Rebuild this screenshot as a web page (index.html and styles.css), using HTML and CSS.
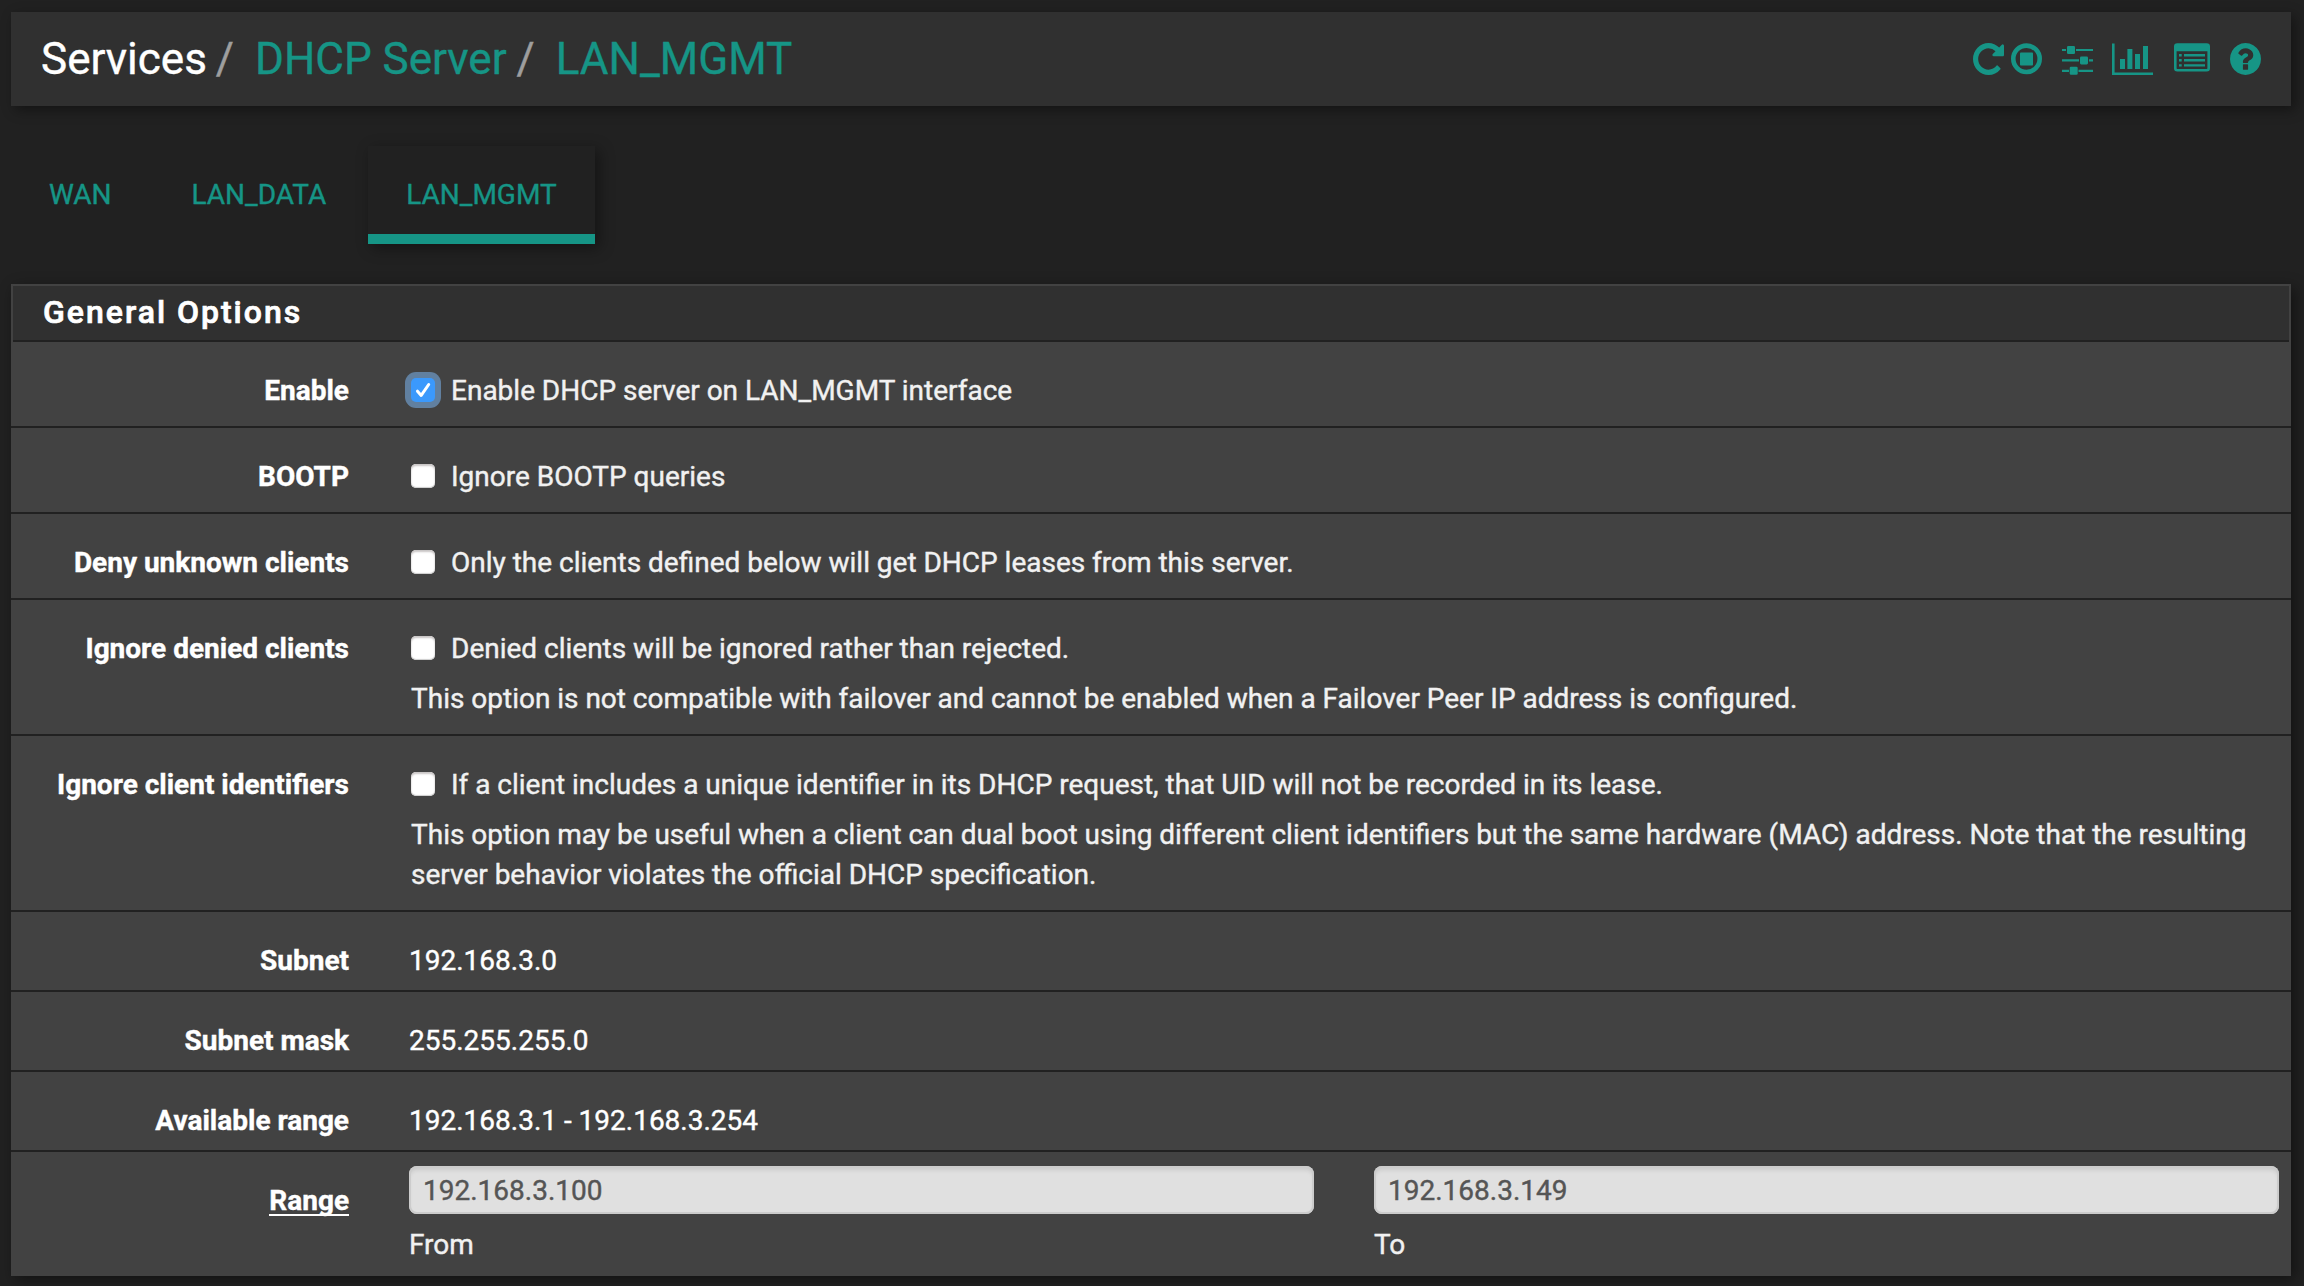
FILE: index.html
```html
<!DOCTYPE html>
<html lang="en">
<head>
<meta charset="utf-8">
<title>Services: DHCP Server: LAN_MGMT</title>
<link rel="stylesheet" href="styles.css">
</head>
<body>
<header class="page-header">
  <ol class="breadcrumb">
    <li class="crumb-root">Services</li>
    <li class="crumb-sep">/</li>
    <li class="crumb-server"><a>DHCP Server</a></li>
    <li class="crumb-sep">/</li>
    <li><a>LAN_MGMT</a></li>
  </ol>
  <div class="tools">
    <svg class="icon-restart" width="31" height="32" viewBox="128 128 1536 1536" preserveAspectRatio="none"><path d="M1664 256v448q0 26-19 45t-45 19h-448q-42 0-59-40-17-39 14-69l138-138q-148-137-349-137-104 0-198.500 40.500t-163.500 109.500-109.500 163.500-40.500 198.500 40.500 198.500 109.500 163.500 163.500 109.500 198.500 40.500q119 0 225-52t179-147q7-10 23-12 14 0 25 9l137 138q9 8 9.500 20.500t-7.500 22.500q-109 132-264 204.500t-327 72.500q-156 0-298-61t-245-164-164-245-61-298 61-298 164-245 245-164 298-61q147 0 284.500 55.500t244.500 156.500l130-129q29-31 70-14 39 17 39 59z"/></svg>
    <svg class="icon-stop" width="31" height="32" viewBox="0 0 31 32"><circle cx="15.500" cy="15.800" r="13.200" fill="none" stroke="#169586" stroke-width="4.600"/><rect x="9" y="9.500" width="13" height="13" rx="0.800"/></svg>
    <svg class="icon-sliders" width="31" height="32" viewBox="0 0 31 32"><path d="M0 6h4v2H0zM14 6h17v2H14zM0 16.300h17v2.200H0zM27 16.300h4v2.200h-4zM0 26.700h7v2.200H0zM16.500 26.700H31v2.200H16.500z"/><rect x="5" y="3" width="8" height="8" rx="1.300"/><rect x="18" y="13.400" width="8" height="8" rx="1.300"/><rect x="7.700" y="23.800" width="8" height="8" rx="1.300"/></svg>
    <svg class="icon-chart" width="41" height="32" viewBox="0 0 41 32"><path d="M0 .4h2.600v29H41V32H0zM8 16h5v10H8zM15.400 6h5v20h-5zM23 11h5v15h-5zM31 3h5v23h-5z"/></svg>
    <svg class="icon-list" width="36" height="32" viewBox="0 0 36 32"><path fill-rule="evenodd" d="M3.300.3h29.400A3.300 3.300 0 0 1 36 3.600v21.600a3.300 3.300 0 0 1-3.300 3.300H3.300A3.300 3.300 0 0 1 0 25.200V3.600A3.300 3.300 0 0 1 3.300.3zM2.600 8.300v16.900q0 .7.700.7h29.400q.7 0 .7-.7V8.300z"/><path d="M5 11h2.700v2.400H5zM5 16.100h2.700v2.400H5zM5 21.200h2.700v2.400H5zM10 11h21v2.400H10zM10 16.100h21v2.400H10zM10 21.200h21v2.400H10z"/></svg>
    <svg class="icon-help" width="31" height="32" viewBox="128 128 1536 1536" preserveAspectRatio="none"><path d="M1024 1376v-192q0-14-9-23t-23-9h-192q-14 0-23 9t-9 23v192q0 14 9 23t23 9h192q14 0 23-9t9-23zm256-672q0-88-55.500-163t-138.500-116-170-41q-243 0-371 213-15 24 8 42l132 100q7 6 19 6 16 0 25-12 53-68 86-92 34-24 86-24 48 0 85.500 26t37.500 59q0 38-20 61t-68 45q-63 28-115.500 86.500t-52.500 125.500v36q0 14 9 23t23 9h192q14 0 23-9t9-23q0-19 21.500-49.500t54.500-49.500q32-18 49-28.500t46-35 44.500-48 28-60.500 12.500-81zm384 192q0 209-103 385.500t-279.500 279.500-385.500 103-385.500-103-279.500-279.500-103-385.500 103-385.500 279.500-279.500 385.500-103 385.500 103 279.500 279.500 103 385.500z"/></svg>
  </div>
</header>
<nav class="tabs">
  <a class="tab">WAN</a>
  <a class="tab">LAN_DATA</a>
  <a class="tab active">LAN_MGMT</a>
</nav>
<main class="panel">
  <h2 class="panel-title">General Options</h2>
  <div class="row">
    <div class="label">Enable</div>
    <div class="field">
      <label class="check"><span class="box checked"><svg width="24" height="24" viewBox="0 0 24 24"><path d="M6.500 13.200l3.700 4.200L17.700 6.500"/></svg></span><span>Enable DHCP server on LAN_MGMT interface</span></label>
    </div>
  </div>
  <div class="row">
    <div class="label">BOOTP</div>
    <div class="field">
      <label class="check"><span class="box"></span><span>Ignore BOOTP queries</span></label>
    </div>
  </div>
  <div class="row">
    <div class="label">Deny unknown clients</div>
    <div class="field">
      <label class="check"><span class="box"></span><span>Only the clients defined below will get DHCP leases from this server.</span></label>
    </div>
  </div>
  <div class="row">
    <div class="label">Ignore denied clients</div>
    <div class="field">
      <label class="check"><span class="box"></span><span>Denied clients will be ignored rather than rejected.</span></label>
      <p class="help">This option is not compatible with failover and cannot be enabled when a Failover Peer IP address is configured.</p>
    </div>
  </div>
  <div class="row">
    <div class="label">Ignore client identifiers</div>
    <div class="field">
      <label class="check"><span class="box"></span><span>If a client includes a unique identifier in its DHCP request, that UID will not be recorded in its lease.</span></label>
      <p class="help">This option may be useful when a client can dual boot using different client identifiers but the same hardware (MAC) address. Note that the resulting<br>server behavior violates the official DHCP specification.</p>
    </div>
  </div>
  <div class="row static">
    <div class="label">Subnet</div>
    <div class="field">192.168.3.0</div>
  </div>
  <div class="row static">
    <div class="label">Subnet mask</div>
    <div class="field">255.255.255.0</div>
  </div>
  <div class="row static">
    <div class="label">Available range</div>
    <div class="field">192.168.3.1 - 192.168.3.254</div>
  </div>
  <div class="row range">
    <div class="label"><span class="required">Range</span></div>
    <div class="field inputs">
      <div class="input-group"><div class="input">192.168.3.100</div><div class="caption">From</div></div>
      <div class="input-group"><div class="input">192.168.3.149</div><div class="caption">To</div></div>
    </div>
  </div>
</main>
</body>
</html>
```

FILE: styles.css
```css
* { box-sizing: border-box; }
html { background: #212121; }
body {
  margin: 0;
  padding: 12px 13px 10px 11px;
  height: 1286px;
  overflow: hidden;
  background: #212121;
  color: #f1f1f1;
  font: 28px/40px Roboto, "Liberation Sans", sans-serif;
  word-spacing: -.06px;
  -webkit-text-stroke: .4px currentColor;
}
.page-header {
  display: flex;
  justify-content: space-between;
  height: 94px;
  padding: 0 30px 0 30px;
  background: #303030;
  box-shadow: 4px 4px 12px rgba(0, 0, 0, .4);
}
.breadcrumb {
  display: flex;
  margin: 0;
  padding: 0;
  list-style: none;
  font-size: 44px;
  line-height: 94px;
  white-space: nowrap;
  color: #169586;
}
.crumb-root { color: #fff; }
.crumb-sep { padding: 0 21px 0 9px; color: #9e9e9e; }
.crumb-server { padding-right: 1px; }
.tools { display: flex; margin-top: 31px; height: 32px; }
.tools svg { display: block; fill: #169586; }
.icon-stop { margin-left: 7px; }
.icon-sliders { margin-left: 20px; }
.icon-chart { margin-left: 19px; }
.icon-list { margin-left: 21px; }
.icon-help { margin-left: 20px; }
.tabs { display: flex; margin-top: 40px; height: 98px; color: #169586; }
.tab { padding: 29px 38px 0 38px; height: 98px; }
.tab:nth-child(2) { padding-left: 42px; padding-right: 42px; }
.tab.active {
  width: 227px;
  border-bottom: 10px solid #169586;
  box-shadow: 4px 4px 14px rgba(0, 0, 0, .4);
}
.panel {
  margin-top: 40px;
  height: 992px;
  background: #424242;
  border: 2px solid #424242;
  border-width: 2px 0 0;
  box-shadow: 4px 4px 14px rgba(0, 0, 0, .45);
}
.panel-title {
  margin: 0 2px;
  padding: 0 0 0 30px;
  height: 56px;
  border-bottom: 2px solid #212121;
  background: #303030;
  color: #fff;
  font-size: 32px;
  font-weight: 500;
  line-height: 53px;
  letter-spacing: 2px;
  -webkit-text-stroke-width: .7px;
}
.row { display: flex; padding: 29px 0 15px; border-bottom: 2px solid #212121; }
.label {
  width: 338px;
  flex: none;
  text-align: right;
  color: #fff;
  font-weight: 700;
}
.field { flex: 1; padding-left: 62px; white-space: nowrap; }
.check { display: flex; align-items: center; height: 40px; }
.box {
  width: 24px;
  height: 24px;
  margin: -2px 16px 0 0;
  border-radius: 5px;
  background: #fff;
  box-shadow: inset 0 2px 2px #c8c4c4, inset 0 -1px 1px #ccc;
}
.box.checked {
  background: #3b99fc;
  box-shadow: 0 0 0 6px #6180a0;
}
.box svg { display: block; fill: none; stroke: #fff; stroke-width: 3; stroke-linecap: round; stroke-linejoin: round; }
.help { margin: 10px 0 0; }
.static { height: 80px; padding: 29px 0 0; }
.static .field { padding-left: 60px; color: #fff; }
.range { height: 124px; padding: 14px 0 0; border: 0; }
.range .label { padding-top: 15px; }
.required { display: inline-block; height: 35px; border-bottom: 2px solid #fff; }
.inputs { display: flex; gap: 60px; padding: 0 12px 0 60px; }
.input-group { flex: 1; }
.input {
  height: 48px;
  padding: 0 14px;
  border-radius: 8px;
  background: #e0e0e0;
  box-shadow: inset 0 0 0 2px #ccc, inset 0 4px 4px rgba(0, 0, 0, .1);
  color: #555;
  line-height: 50px;
}
.caption { padding-top: 11px; }
```
